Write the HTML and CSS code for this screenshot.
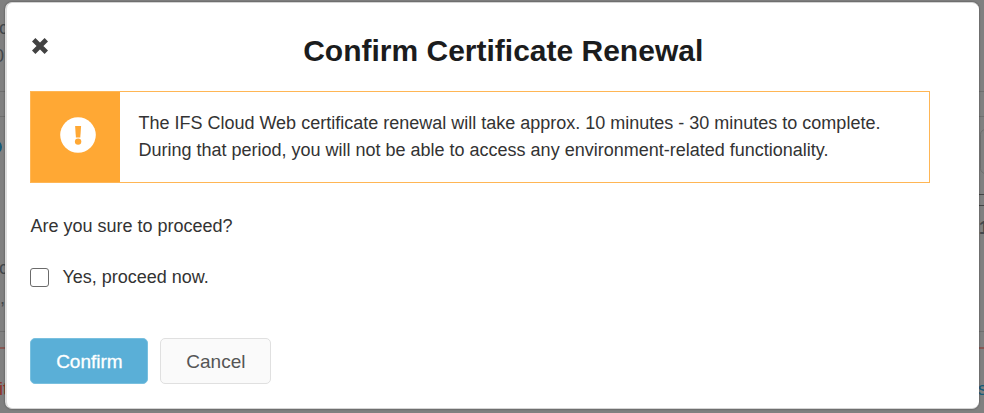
FILE: index.html
```html
<!DOCTYPE html>
<html lang="en">
<head>
    <meta charset="UTF-8">
    <meta name="viewport" content="width=device-width, initial-scale=1.0">
    <title>Confirm Certificate Renewal</title>
    <link rel="stylesheet" href="styles.css">
</head>
<body>
    <!-- Page under the dialog, only its edges show -->
    <svg class="backdrop" width="984" height="413" aria-hidden="true">
        <path class="rule" d="M0 91.5H984M0 116.5H984M0 331.5H984"/>
        <path class="rule-dark" d="M978 194.5H984M978 205.5H984"/>
        <path class="rule-red" d="M0 348H984"/>
        <rect class="rule" x="980.5" y="129.5" width="30" height="44" rx="5"/>
        <circle class="dot" cx="-5" cy="147" r="7"/>
        <text x="-1" y="34">c</text>
        <text x="-6" y="62">0</text>
        <text x="-1" y="274">c</text>
        <text x="0" y="304">,</text>
        <text class="red" x="-1" y="395">it</text>
        <text class="bold" x="979" y="234">1</text>
        <text class="link" x="978" y="395">s</text>
    </svg>

    <div class="modal" role="dialog" aria-labelledby="modalTitle">
        <header class="modal-header">
            <button type="button" class="close" aria-label="Close">
                <svg width="18" height="18" viewBox="0 0 18 18">
                    <path d="M2.7 2.7L15.3 15.3M15.3 2.7L2.7 15.3"/>
                </svg>
            </button>
            <h1 id="modalTitle">Confirm Certificate Renewal</h1>
        </header>

        <div class="alert">
            <div class="alert-icon">
                <svg width="36" height="36" viewBox="0 0 36 36">
                    <circle cx="18" cy="18" r="17.8" fill="#fff"/>
                    <path d="M15.1 9h6l-.8 11.4h-4.4z" fill="#ffa834"/>
                    <circle cx="18.1" cy="24.6" r="3.2" fill="#ffa834"/>
                </svg>
            </div>
            <div class="alert-text">
                <p>The IFS Cloud Web certificate renewal will take approx. 10 minutes - 30 minutes to complete.</p>
                <p>During that period, you will not be able to access any environment-related functionality.</p>
            </div>
        </div>

        <p class="question">Are you sure to proceed?</p>

        <label class="check">
            <input type="checkbox" id="proceed" name="proceed">
            <span>Yes, proceed now.</span>
        </label>

        <div class="actions">
            <button type="button" class="btn btn-confirm">Confirm</button>
            <button type="button" class="btn btn-cancel">Cancel</button>
        </div>
    </div>
</body>
</html>
```
FILE: styles.css
```css
* {
    box-sizing: border-box;
}
body {
    font-family: "Liberation Sans", Arial, sans-serif;
    font-size: 18px;
    color: #333;
    margin: 0;
    padding: 2px 5px 4px;
    height: 413px;
    background-color: #808080;
    overflow: hidden;
}
.backdrop {
    position: absolute;
    top: 0;
    left: 0;
    font-size: 18px;
    fill: #42474c;
}
.backdrop .rule {
    fill: none;
    stroke: #6f6f6f;
}
.backdrop .rule-dark {
    stroke: #444;
}
.backdrop .rule-red {
    stroke: #8f3029;
}
.backdrop .dot,
.backdrop .link {
    fill: #135b7a;
}
.backdrop .red {
    fill: #8f3029;
}
.backdrop .bold {
    font-weight: bold;
}
.modal {
    position: relative;
    height: 407px;
    padding: 0 24px 0 23.4px;
    background-color: #fff;
    border: 1px solid #d4d4d4;
    border-left: 2px solid #dedede;
    border-right: 0;
    border-radius: 7px;
    box-shadow: 0 0 2px rgba(0, 0, 0, 0.5);
}
.modal-header {
    display: flex;
    height: 88px;
}
.close {
    width: 18px;
    height: 18px;
    margin: 34px 0 0 1px;
    padding: 0;
    border: 0;
    background: none;
    cursor: pointer;
}
.close svg {
    display: block;
    stroke: #424242;
    stroke-width: 4.8;
}
.modal-header h1 {
    flex: 1;
    margin: 30px 0 0 2px;
    font-size: 30px;
    line-height: 36px;
    text-align: center;
    color: #1b1c1d;
}
.alert {
    display: flex;
    width: 900px;
    height: 92px;
    border: 1px solid #ffb655;
}
.alert-icon {
    display: flex;
    align-items: center;
    justify-content: center;
    width: 89px;
    padding: 0 0 4px 5px;
    background-color: #ffa834;
}
.alert-text {
    flex: 1;
    padding: 18px 0 0 18px;
    line-height: 27px;
    white-space: nowrap;
}
.alert-text p {
    margin: 0;
}
.question {
    margin: 31px 0 0;
    line-height: 24px;
}
.check {
    display: flex;
    align-items: center;
    gap: 13px;
    height: 24px;
    margin-top: 27px;
}
.check input {
    appearance: none;
    width: 19px;
    height: 19px;
    margin: 0;
    border: 1px solid #6b6b6b;
    border-radius: 3px;
}
.actions {
    display: flex;
    gap: 12px;
    margin-top: 49px;
}
.btn {
    height: 46px;
    padding: 2px 0 0;
    border-radius: 5px;
    font-family: inherit;
    font-size: 19px;
    cursor: pointer;
}
.btn-confirm {
    width: 118px;
    border: 1px solid #79c0df;
    background-color: #5aafd7;
    color: #fff;
    -webkit-text-stroke: 0.3px #fff;
}
.btn-cancel {
    width: 111px;
    border: 1px solid #e0e0e0;
    background-color: #fafafa;
    color: #555;
}
```
